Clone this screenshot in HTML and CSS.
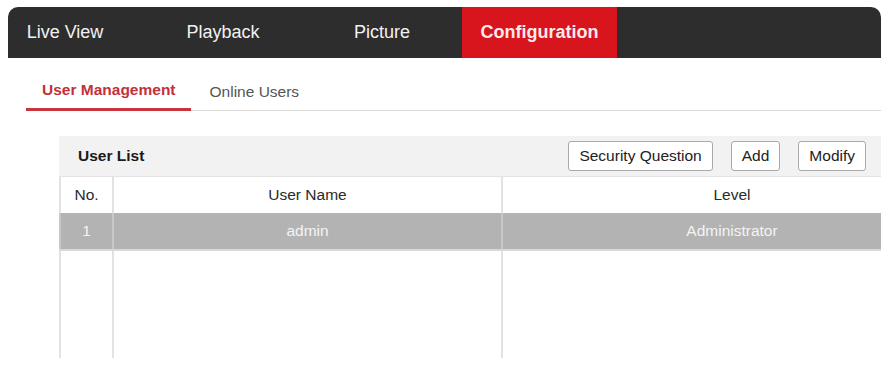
FILE: index.html
```html
<!DOCTYPE html>
<html>
<head>
<meta charset="utf-8">
<link rel="stylesheet" href="styles.css">
</head>
<body>
<header class="topbar">
  <nav class="mainnav">
    <a class="navitem nav-live">Live View</a>
    <a class="navitem nav-play">Playback</a>
    <a class="navitem nav-pic">Picture</a>
    <a class="navitem active">Configuration</a>
  </nav>
</header>
<div class="subtabs">
  <a class="subtab active">User Management</a>
  <a class="subtab">Online Users</a>
</div>
<section class="panel">
  <div class="panel-head">
    <span class="panel-title">User List</span>
    <div class="actions">
      <button class="btn">Security Question</button>
      <button class="btn">Add</button>
      <button class="btn">Modify</button>
    </div>
  </div>
  <table class="users">
    <colgroup>
      <col class="c-no">
      <col class="c-name">
      <col class="c-level">
    </colgroup>
    <thead>
      <tr><th>No.</th><th>User Name</th><th class="lvl">Level</th></tr>
    </thead>
    <tbody>
      <tr class="selected"><td>1</td><td>admin</td><td class="lvl">Administrator</td></tr>
      <tr class="filler"><td></td><td></td><td></td></tr>
    </tbody>
  </table>
</section>
</body>
</html>
```
FILE: styles.css
```css
* { box-sizing: border-box; }
body {
  margin: 0;
  background: #fff;
  font-family: "Liberation Sans", Arial, sans-serif;
  color: #222;
}
.topbar {
  margin: 7px 12px 0 8px;
  height: 51px;
  background: #2d2d2d;
  border-radius: 10px 10px 0 0;
  overflow: hidden;
}
.mainnav {
  display: flex;
  height: 100%;
  margin-left: -21px;
}
.navitem {
  display: flex;
  align-items: center;
  justify-content: center;
  color: #f2f2f2;
  font-size: 18px;
  padding-bottom: 1px;
}
.nav-live { width: 156px; }
.nav-play { width: 160px; }
.nav-pic { width: 158px; }
.navitem.active {
  width: 155px;
  margin-left: 1px;
  background: #d8141c;
  color: #fbeaea;
  font-weight: bold;
}
.subtabs {
  display: flex;
  margin: 13px 12px 0 26px;
  border-bottom: 1px solid #d9d9d9;
}
.subtab {
  padding: 9px 16px 8px 16px;
  line-height: 20px;
  font-size: 15.5px;
  color: #555;
  border-bottom: 3px solid transparent;
  margin-bottom: -1px;
}
.subtab.active {
  color: #c3303a;
  font-weight: bold;
  border-bottom-color: #c9333c;
  padding-right: 15px;
}
.subtab + .subtab { padding: 11px 16px 6px 19px; }
.panel {
  margin: 25px 12px 0 59px;
}
.panel-head {
  height: 41px;
  background: #f2f2f2;
  display: flex;
  align-items: center;
  justify-content: space-between;
  padding: 0 15px 0 19px;
  border-bottom: 1px solid #e4e4e4;
}
.panel-title {
  font-weight: bold;
  font-size: 15.5px;
  color: #1a1a1a;
}
.actions {
  display: flex;
  gap: 18px;
}
.btn {
  font-family: inherit;
  font-size: 15.5px;
  color: #222;
  background: #fff;
  border: 1px solid #a9a9a9;
  border-radius: 3px;
  height: 30px;
  padding: 0 10px;
}
.users {
  width: 100%;
  border-collapse: collapse;
  table-layout: fixed;
  font-size: 15.5px;
}
.c-no { width: 53px; }
.c-name { width: 389px; }
.users th, .users td {
  font-weight: normal;
  text-align: center;
  border-left: 2px solid #e2e2e2;
  padding: 0;
}
.users th {
  height: 36px;
  color: #2a2a2a;
}
.users th.lvl, .users td.lvl { padding-left: 80px; }
.selected td {
  height: 37px;
  background: #b3b3b3;
  color: #f4f4f4;
  border-bottom: 2px solid #d9d9d9;
  border-left-color: #c8c8c8;
}
.filler td { height: 108px; }
```
